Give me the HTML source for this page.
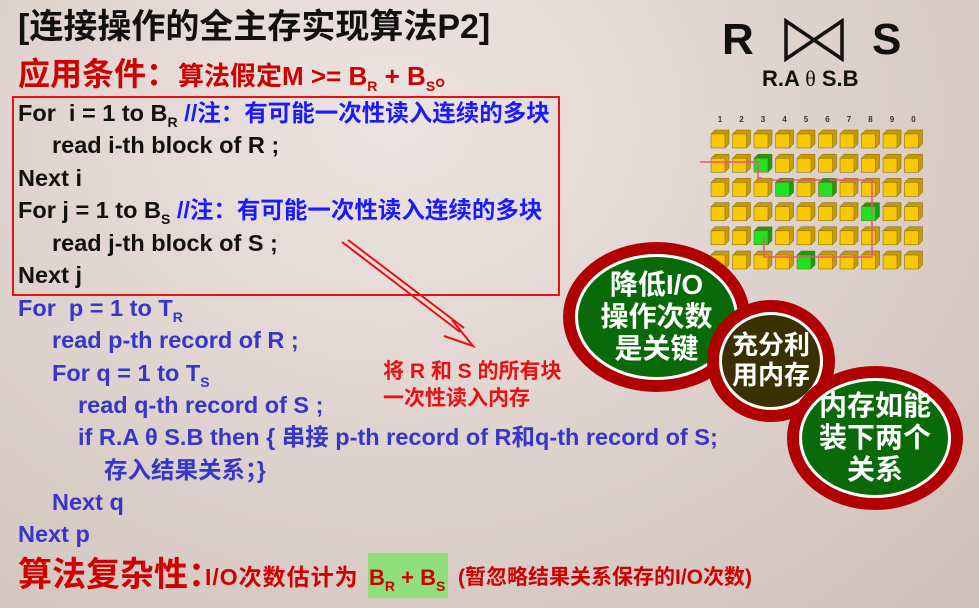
<!DOCTYPE html>
<html><head><meta charset="utf-8"><style>
body{margin:0;width:979px;height:608px;overflow:hidden;position:relative;
background:radial-gradient(ellipse at 40% 20%,#ece4e2 0%,#e0d4d0 45%,#cfc0b8 100%);
font-family:"Liberation Sans","Noto Sans CJK SC",sans-serif;font-weight:bold}
.t{position:absolute;white-space:nowrap;line-height:1}
.c{font-size:23.5px;color:#111}
.b{color:#3636c8}
.bl{color:#1a1aff}
sub{font-size:14px;vertical-align:-6px}
.ell{position:absolute;border-radius:50%;box-sizing:border-box;border:12px solid #b00000}
.in{position:absolute;inset:0;border-radius:50%;border:3px solid #fff;display:flex;align-items:center;justify-content:center;text-align:center;color:#fff;font-size:28px;line-height:1.15}
</style></head><body>
<div class="t" style="left:18px;top:10px;font-size:34px;color:#111">[连接操作的全主存实现算法P2]</div>
<div class="t" style="left:18px;top:58px;color:#d00000"><span style="font-size:32px">应用条件：</span><span style="font-size:26px">算法假定M &gt;= B<sub>R</sub> + B<sub>S</sub>。</span></div>
<div style="position:absolute;left:12px;top:96px;width:544px;height:196px;border:2px solid #e81010"></div>
<div class="t c" style="left:18px;top:102px">For &nbsp;i = 1 to B<sub>R</sub> <span class="bl">//注：有可能一次性读入连续的多块</span></div>
<div class="t c" style="left:52px;top:134px">read i-th block of R ;</div>
<div class="t c" style="left:18px;top:167px">Next i</div>
<div class="t c" style="left:18px;top:199px">For j = 1 to B<sub>S</sub> <span class="bl">//注：有可能一次性读入连续的多块</span></div>
<div class="t c" style="left:52px;top:232px">read j-th block of S ;</div>
<div class="t c" style="left:18px;top:264px">Next j</div>
<div class="t c b" style="left:18px;top:297px">For &nbsp;p = 1 to T<sub>R</sub></div>
<div class="t c b" style="left:52px;top:329px">read p-th record of R ;</div>
<div class="t c b" style="left:52px;top:362px">For q = 1 to T<sub>S</sub></div>
<div class="t c b" style="left:78px;top:394px">read q-th record of S ;</div>
<div class="t c b" style="left:78px;top:426px">if R.A θ S.B then { 串接 p-th record of R和q-th record of S;</div>
<div class="t c b" style="left:104px;top:459px">存入结果关系；}</div>
<div class="t c b" style="left:52px;top:491px">Next q</div>
<div class="t c b" style="left:18px;top:523px">Next p</div>
<div class="t" style="left:383px;top:361px;font-size:21px;color:#e81010">将 R 和 S 的所有块</div>
<div class="t" style="left:383px;top:388px;font-size:21px;color:#e81010">一次性读入内存</div>
<svg style="position:absolute;left:0;top:0" width="979" height="608">
<path d="M342 242 L460 332 M348 240 L464 328 M452 320 L473 346 L444 336" fill="none" stroke="#e81010" stroke-width="2"/>
</svg>
<div style="position:absolute;left:368px;top:553px;width:80px;height:45px;background:#8fe07a"></div>
<div class="t" style="left:18px;top:558px;color:#d00000;font-size:34px">算法复杂性：</div>
<div class="t" style="left:205px;top:566px;color:#d00000;font-size:23px;letter-spacing:1px">I/O次数估计为</div>
<div class="t" style="left:369px;top:567px;color:#d00000;font-size:22px">B<sub>R</sub> + B<sub>S</sub></div>
<div class="t" style="left:458px;top:567px;color:#d00000;font-size:21px">(暂忽略结果关系保存的I/O次数)</div>
<div class="t" style="left:722px;top:18px;font-size:44px;color:#111">R</div>
<div class="t" style="left:872px;top:18px;font-size:44px;color:#111">S</div>
<svg style="position:absolute;left:783px;top:18px" width="62" height="44"><path d="M3 3 L3 41 L59 3 L59 41 Z" fill="none" stroke="#111" stroke-width="3.5"/></svg>
<div class="t" style="left:762px;top:68px;font-size:22px;color:#111">R.A <span style="font-weight:normal;font-family:'Liberation Serif',serif">θ</span> S.B</div>
<svg style="position:absolute;left:700px;top:110px" width="250" height="170" id="g"></svg>
<script>
var g=document.getElementById('g'),s='',grn={'1,2':1,'2,3':1,'2,5':1,'3,7':1,'4,2':1,'5,4':1};
var nums=['1','2','3','4','5','6','7','8','9','0'];
for(var c=0;c<10;c++)s+='<text x="'+(20+c*21.5)+'" y="12" font-size="8" text-anchor="middle" fill="#333">'+nums[c]+'</text>';
for(var r=0;r<6;r++)for(var c=0;c<10;c++){var x=11+c*21.5,y=20+r*24.2,G=grn[r+','+c];
var f=G?'#22e022':'#f8c800',d=G?'#10a010':'#c89a00';
s+='<path d="M'+x+' '+(y+4)+' l4 -4 h14 v14 l-4 4 z" fill="'+d+'" stroke="#7a6000" stroke-width="0.5"/><rect x="'+x+'" y="'+(y+4)+'" width="14" height="14" fill="'+f+'" stroke="#7a6000" stroke-width="0.5"/>';}
s+='<path d="M0 52 H58 V68 H62 M70 70 H122 M130 70 H172 V105 M172 110 V147 H64 V128" fill="none" stroke="#f05080" stroke-width="1.5"/>';
g.innerHTML=s;
</script>
<div class="ell" style="left:563px;top:242px;width:187px;height:150px"><div class="in" style="background:#0a6a0a">降低I/O<br>操作次数<br>是关键</div></div>
<div class="ell" style="left:707px;top:300px;width:128px;height:122px"><div class="in" style="background:#3a3000;font-size:26px">充分利<br>用内存</div></div>
<div class="ell" style="left:787px;top:366px;width:176px;height:144px"><div class="in" style="background:#0a6a0a">内存如能<br>装下两个<br>关系</div></div>
</body></html>
